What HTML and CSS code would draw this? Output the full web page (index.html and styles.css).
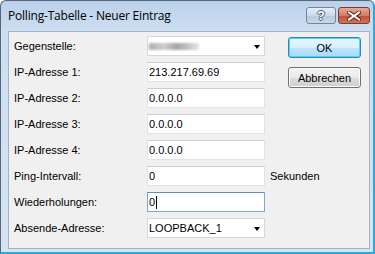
FILE: index.html
```html
<!DOCTYPE html>
<html lang="de">
<head>
    <meta charset="UTF-8">
    <title>Polling-Tabelle - Neuer Eintrag</title>
    <link rel="stylesheet" href="styles.css">
</head>
<body>
    <div class="window">
        <div class="titlebar">
            <span class="title">Polling-Tabelle - Neuer Eintrag</span>
            <div class="caption-buttons">
                <span class="cap-btn help">?</span>
                <span class="cap-btn close">
                    <svg width="14" height="10" viewBox="0 0 14 10">
                        <path d="M2 1.5 L12 8.5 M12 1.5 L2 8.5" stroke="#5a2a22" stroke-width="4" stroke-linecap="square"/>
                        <path d="M2 1.5 L12 8.5 M12 1.5 L2 8.5" stroke="#ffffff" stroke-width="2" stroke-linecap="square"/>
                    </svg>
                </span>
            </div>
        </div>

        <div class="client">
            <div class="form">
                <span class="label">Gegenstelle:</span>
                <div class="field combo"><span class="blurred"></span><span class="arrow"></span></div>
                <span></span>

                <span class="label">IP-Adresse 1:</span>
                <div class="field">213.217.69.69</div>
                <span></span>

                <span class="label">IP-Adresse 2:</span>
                <div class="field">0.0.0.0</div>
                <span></span>

                <span class="label">IP-Adresse 3:</span>
                <div class="field">0.0.0.0</div>
                <span></span>

                <span class="label">IP-Adresse 4:</span>
                <div class="field">0.0.0.0</div>
                <span></span>

                <span class="label">Ping-Intervall:</span>
                <div class="field">0</div>
                <span class="unit">Sekunden</span>

                <span class="label">Wiederholungen:</span>
                <div class="field focused">0<span class="caret"></span></div>
                <span></span>

                <span class="label">Absende-Adresse:</span>
                <div class="field combo">LOOPBACK_1<span class="arrow"></span></div>
                <span></span>
            </div>

            <div class="buttons">
                <button class="btn default">OK</button>
                <button class="btn">Abbrechen</button>
            </div>
        </div>
    </div>
</body>
</html>
```

FILE: styles.css
```css
/* Dialogfenster im Stil von Windows 7 (Aero Basic) */
body {
    margin: 0;
    background-color: #ffffff;
    font-family: "Liberation Sans", Arial, sans-serif;
    font-size: 11px;
    color: #000000;
}

.window {
    box-sizing: border-box;
    width: 375px;
    height: 254px;
    border: 1px solid #58667a;
    border-right: 2px solid #2aa8e6;
    border-bottom: 2px solid #2aa8e6;
    border-radius: 6px 6px 0 0;
    background: linear-gradient(#bad0ea, #cddef1 28px, #d6e4f3);
    padding: 0 3px 3px 7px;
    display: flex;
    flex-direction: column;
}

/* Titelleiste */
.titlebar {
    height: 30px;
    display: flex;
    align-items: flex-start;
}

.title {
    font-family: "Open Sans", "Noto Sans", sans-serif;
    font-size: 12px;
    margin-top: 6px;
    letter-spacing: -0.2px;
}

.caption-buttons {
    margin-left: auto;
    margin-top: 6px;
    display: flex;
    gap: 2px;
}

.cap-btn {
    box-sizing: border-box;
    height: 17px;
    border-radius: 3px;
    display: flex;
    align-items: center;
    justify-content: center;
}

.help {
    width: 30px;
    border: 1px solid #73859e;
    background: linear-gradient(#e6eef8, #cbd9ea 50%, #b7c9df 51%, #c9d8ea);
    color: #ffffff;
    font-family: "Liberation Sans", sans-serif;
    font-weight: bold;
    font-size: 13px;
    text-shadow: 1px 0 #4b5a70, -1px 0 #4b5a70, 0 1px #4b5a70, 0 -1px #4b5a70;
}

.close {
    width: 32px;
    border: 1px solid #7a3c30;
    background: linear-gradient(#e9a99b, #d77a64 50%, #c44d33 51%, #d0735c);
}

/* Arbeitsbereich */
.client {
    flex: 1;
    background-color: #f0f0f0;
    border: 1px solid #a3b4c9;
    display: flex;
}

.form {
    display: grid;
    grid-template-columns: 133px 118px 0;
    grid-auto-rows: 20px;
    row-gap: 6px;
    align-items: center;
    padding: 4px 0 0 5px;
}

.field {
    box-sizing: border-box;
    height: 20px;
    background-color: #ffffff;
    border: 1px solid #dfe3e8;
    border-top-color: #c9ced6;
    padding-left: 1px;
    display: flex;
    align-items: center;
    position: relative;
}

.field.focused {
    border-color: #7fa7cf;
    border-top-color: #5d8fbf;
}

.caret {
    width: 1px;
    height: 13px;
    background-color: #000000;
    margin-left: 1px;
}

.combo {
    border-color: #d8d8d8;
}

.arrow {
    position: absolute;
    right: 4px;
    top: 8px;
    border-left: 3.5px solid transparent;
    border-right: 3.5px solid transparent;
    border-top: 4px solid #000000;
}

.blurred {
    width: 50px;
    height: 7px;
    background: linear-gradient(90deg, #9a9a9a, #c4c4c4 30%, #8d8d8d 55%, #b8b8b8 80%, #e0e0e0);
    filter: blur(1.2px);
    opacity: 0.8;
}

.unit {
    margin-left: 5px;
    white-space: nowrap;
}

/* Schaltflächen */
.buttons {
    margin-left: auto;
    margin-right: 8px;
    padding-top: 5px;
    display: flex;
    flex-direction: column;
    gap: 9px;
}

.btn {
    box-sizing: border-box;
    width: 73px;
    height: 21px;
    border: 1px solid #707070;
    border-radius: 3px;
    background: linear-gradient(#f2f2f2, #ebebeb 50%, #dddddd 51%, #cfcfcf);
    box-shadow: inset 0 0 0 1px #fcfcfc;
    font-family: "Liberation Sans", Arial, sans-serif;
    font-size: 11px;
    color: #000000;
    padding: 0;
}

.btn.default {
    border-color: #3c7fb1;
    background: linear-gradient(#eaf6fd, #d9f0fc 50%, #bee6fd 51%, #a7d9f5);
    box-shadow: inset 0 0 0 1px #48d8fb;
}
```
